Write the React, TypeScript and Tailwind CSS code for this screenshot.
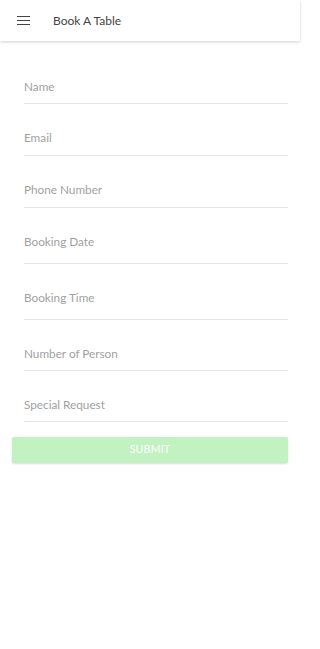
const FIELDS = [
  { label: "Name", pb: "pb-[8px]" },
  { label: "Email", pb: "pb-[9px]" },
  { label: "Phone Number", pb: "pb-[9px]" },
  { label: "Booking Date", pb: "pb-[13px]" },
  { label: "Booking Time", pb: "pb-[13px]" },
  { label: "Number of Person", pb: "pb-[8px]" },
  { label: "Special Request", pb: "pb-[8px]" },
];

export default function App() {
  return (
    <div className="min-h-[649px] w-[300px] bg-white font-['Lato','Open_Sans',sans-serif]">
      <header className="flex h-[41px] items-center bg-white shadow-[0_1px_3px_rgba(0,0,0,0.18)]">
        <div className="ml-[17px] flex w-[13px] flex-col gap-[2.5px]">
          <span className="h-[1.5px] bg-[#444]" />
          <span className="h-[1.5px] bg-[#444]" />
          <span className="h-[1.5px] bg-[#444]" />
        </div>
        <h1 className="ml-[23px] text-[12px] text-[#444]">Book A Table</h1>
      </header>

      <form className="px-[12px] pt-[12px]" onSubmit={(e) => e.preventDefault()}>
        {FIELDS.map((f) => (
          <div key={f.label} className={`ml-[12px] border-b border-[#e6e6e6] pt-[26px] ${f.pb}`}>
            <p className="text-[11.75px] leading-[16px] text-[#9f9f9f]">{f.label}</p>
          </div>
        ))}
        <button
          type="submit"
          className="mt-[15px] flex h-[26px] w-full items-center justify-center rounded-[2px] bg-[#c2f1c2] text-[10.5px] tracking-wide text-white shadow-[0_1px_2px_rgba(0,0,0,0.15)]"
        >
          SUBMIT
        </button>
      </form>
    </div>
  );
}
